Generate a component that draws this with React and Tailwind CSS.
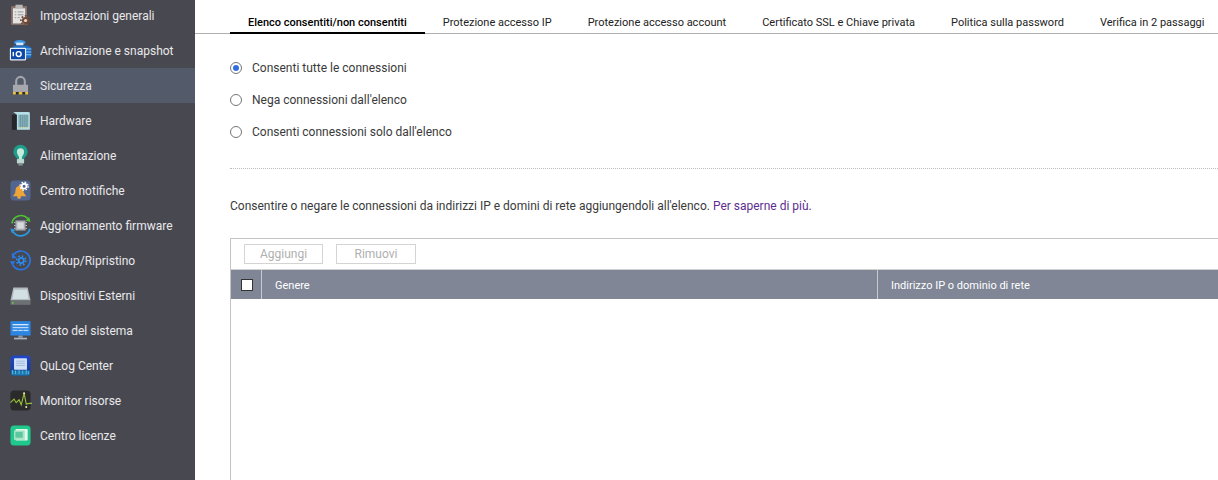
import React from "react";

const I = ({ children }) => (
  <svg width="23" height="23" viewBox="0 0 32 32" className="shrink-0">{children}</svg>
);

const icons = {
  settings: (
    <I>
      <rect x="3" y="3" width="22" height="26" fill="#8d7468" />
      <rect x="5.5" y="6" width="17" height="21" fill="#e4e4e4" />
      <rect x="9" y="1" width="10" height="5" fill="#b9b9b9" />
      <path d="M8 11h2M12 11h8M8 15h2M12 15h8M8 19h2M12 19h3" stroke="#8a8a8a" strokeWidth="1.2" />
      <circle cx="23" cy="23" r="5" fill="#6e4a38" />
      <circle cx="23" cy="23" r="6.5" fill="none" stroke="#6e4a38" strokeWidth="2.4" strokeDasharray="2.4 2.4" />
      <circle cx="23" cy="23" r="2.2" fill="#e8d8c8" />
    </I>
  ),
  storage: (
    <I>
      <ellipse cx="15" cy="5" rx="8" ry="3.5" fill="#3b97ea" />
      <rect x="10" y="5" width="10" height="4" fill="#d5e8fa" />
      <path d="M6 9h20l5 3v12a3 3 0 0 1-3 3H6z" fill="#1d6fc7" />
      <path d="M22 14h9M22 18h9M22 22h9" stroke="#8cc4f5" strokeWidth="1.4" />
      <rect x="2" y="13" width="21" height="16" rx="1" fill="#0d47a8" stroke="#e9f1fa" strokeWidth="1.6" />
      <circle cx="13.5" cy="21" r="3.4" fill="none" stroke="#ffffff" strokeWidth="2" />
      <rect x="5" y="18" width="2" height="6" fill="#ffffff" />
    </I>
  ),
  lock: (
    <I>
      <path d="M10 16v-6a6 6 0 0 1 12 0v6" fill="none" stroke="#a3a5ac" strokeWidth="3" />
      <rect x="5.5" y="15" width="21" height="13" rx="1" fill="#a6a8ae" />
      <rect x="5.5" y="25" width="21" height="3.5" fill="#2d2d30" />
      <path d="M5.5 25h4v3.5h-4zM13.5 25h5v3.5h-5zM22.5 25h4v3.5h-4z" fill="#eac33a" />
    </I>
  ),
  hardware: (
    <I>
      <rect x="4" y="8" width="7" height="21" fill="#25262a" />
      <path d="M6 4h21a2 2 0 0 1 2 2v23H11V8z" fill="#b5dfe6" />
      <rect x="13" y="8" width="14" height="17" fill="#86b0b9" />
      <path d="M16 8v17M19 8v17M22 8v17M25 8v17" stroke="#5f8a96" strokeWidth="1" />
      <path d="M13 26h14" stroke="#c9b04a" strokeWidth="1.2" strokeDasharray="1.4 1.4" />
    </I>
  ),
  power: (
    <I>
      <path d="M16 1a10 10 0 0 1 10 10c0 4-3 6-5 9v2H11v-2c-2-3-5-5-5-9A10 10 0 0 1 16 1z" fill="#1f9c8a" />
      <path d="M16 6a5 5 0 0 1 5 5c0 3-2 5-3 7v5h-4v-5c-1-2-3-4-3-7a5 5 0 0 1 5-5z" fill="#c5ebdc" />
      <rect x="11" y="21" width="10" height="6" rx="1" fill="#bcd6d2" />
      <rect x="13" y="27" width="6" height="3" fill="#85928f" />
    </I>
  ),
  notify: (
    <I>
      <rect x="2" y="2" width="28" height="28" rx="5" fill="#51658f" />
      <path d="M15 9c3 1 5 4 5 7 0 3 2 5 4 8H5c2-2 4-4 4-8 0-4 2-6 6-7z" fill="#eda53a" />
      <circle cx="14" cy="25" r="2.6" fill="#eda53a" />
      <circle cx="21" cy="10" r="3.4" fill="none" stroke="#ffffff" strokeWidth="2.6" />
      <circle cx="21" cy="10" r="5.6" fill="none" stroke="#ffffff" strokeWidth="1.8" strokeDasharray="2.2 2.2" />
    </I>
  ),
  firmware: (
    <I>
      <path d="M4 13a13 13 0 0 1 22-7" fill="none" stroke="#4fc233" strokeWidth="2.4" />
      <path d="M30 11l-7-2 5-5z" fill="#4fc233" />
      <path d="M29 21a13 13 0 0 1-23 4" fill="none" stroke="#2c9ae0" strokeWidth="2.4" />
      <path d="M2 20l7 2-5 5z" fill="#2c9ae0" />
      <rect x="9" y="9" width="14" height="14" fill="#a6acb1" />
      <rect x="11.5" y="11.5" width="9" height="9" fill="#d7dadd" />
      <path d="M7 12h2M7 16h2M7 20h2M23 12h2M23 16h2M23 20h2" stroke="#c8cdd1" strokeWidth="1.2" />
    </I>
  ),
  backup: (
    <I>
      <path d="M6 8a13 13 0 1 1-1 14" fill="none" stroke="#2a75e0" strokeWidth="2.4" />
      <path d="M1 17h8l-4 6zM4 5v8h7z" fill="#2a75e0" />
      <circle cx="17" cy="16" r="3.6" fill="none" stroke="#2a8cf0" strokeWidth="2.6" />
      <circle cx="17" cy="16" r="6.4" fill="none" stroke="#2a8cf0" strokeWidth="2.2" strokeDasharray="2.4 2.6" />
    </I>
  ),
  external: (
    <I>
      <path d="M2 23 6 5h20l4 18z" fill="#b4bbbe" />
      <path d="M7 8h18l2 13H5z" fill="#d2e0e4" />
      <rect x="2" y="23" width="28" height="6" fill="#6d7072" />
      <rect x="4" y="25" width="2.4" height="2.4" fill="#4fd03c" />
    </I>
  ),
  status: (
    <I>
      <rect x="2" y="3" width="28" height="20" fill="#2b85e3" />
      <rect x="5" y="7" width="22" height="1.8" fill="#dcebfb" />
      <rect x="5" y="11" width="22" height="1.8" fill="#bcd9f7" />
      <rect x="5" y="15" width="7" height="1.8" fill="#bcd9f7" />
      <rect x="13" y="15" width="6" height="1.8" fill="#bcd9f7" />
      <rect x="20" y="15" width="7" height="1.8" fill="#bcd9f7" />
      <rect x="13" y="23" width="6" height="3" fill="#8c9aa5" />
      <rect x="7" y="26" width="18" height="2.4" fill="#a9b4bc" />
    </I>
  ),
  qulog: (
    <I>
      <defs>
        <linearGradient id="ql" x1="0" y1="0" x2="0" y2="1">
          <stop offset="0" stopColor="#2347c9" />
          <stop offset="1" stopColor="#123a8c" />
        </linearGradient>
      </defs>
      <rect x="2" y="2" width="28" height="28" rx="5" fill="url(#ql)" />
      <rect x="7" y="6" width="18" height="16" rx="1" fill="#cfe0f5" />
      <path d="M10 10h12M10 13h12M10 16h12" stroke="#91abd4" strokeWidth="1" />
      <path d="M3 23h26v4a3 3 0 0 1-3 3H6a3 3 0 0 1-3-3z" fill="#1e78b0" />
      <path d="M5 22v6M9 23v5M14 21v7M19 23v5M24 22v6M27 24v4" stroke="#6fd0e8" strokeWidth="1" />
    </I>
  ),
  monitor: (
    <I>
      <rect x="2" y="2" width="28" height="28" rx="5" fill="#2a2a2a" />
      <path d="M2 19l5-5 3 5 4-4 3 7 4-16 3 15 4-1h4" fill="none" stroke="#9ac23c" strokeWidth="1.5" />
      <circle cx="21" cy="6" r="1.4" fill="#e8efb5" />
      <circle cx="24" cy="25" r="1.4" fill="#e8efb5" />
    </I>
  ),
  license: (
    <I>
      <rect x="2" y="2" width="28" height="28" rx="5" fill="#1fc98c" />
      <rect x="9" y="7" width="17" height="16" rx="1" fill="#e6f6ec" />
      <rect x="7" y="9" width="15" height="13" fill="#a6e4c6" />
      <rect x="9" y="11" width="10" height="8" fill="#5cc79e" />
    </I>
  ),
};

const items = [
  ["settings", "Impostazioni generali"],
  ["storage", "Archiviazione e snapshot"],
  ["lock", "Sicurezza", true],
  ["hardware", "Hardware"],
  ["power", "Alimentazione"],
  ["notify", "Centro notifiche"],
  ["firmware", "Aggiornamento firmware"],
  ["backup", "Backup/Ripristino"],
  ["external", "Dispositivi Esterni"],
  ["status", "Stato del sistema"],
  ["qulog", "QuLog Center"],
  ["monitor", "Monitor risorse"],
  ["license", "Centro licenze"],
];

const tabs = [
  "Elenco consentiti/non consentiti",
  "Protezione accesso IP",
  "Protezione accesso account",
  "Certificato SSL e Chiave privata",
  "Politica sulla password",
  "Verifica in 2 passaggi",
];

const Radio = ({ on, label }) => (
  <div className="flex items-center h-[32px]">
    <span className="w-[12px] h-[12px] rounded-full border border-[#757575] bg-white flex items-center justify-center shrink-0">
      {on && <span className="w-[6px] h-[6px] rounded-full bg-[#2f6fe0]" />}
    </span>
    <span className="ml-[10px] text-[12px] text-[#3a3a3a]">{label}</span>
  </div>
);

export default function App() {
  return (
    <div className="flex w-[1218px] h-[480px] overflow-hidden bg-white font-['Roboto',sans-serif]">
      <aside className="w-[195px] shrink-0 bg-[#484851] overflow-hidden">
        <ul className="-mt-[2px]">
          {items.map(([k, label, active]) => (
            <li
              key={label}
              className={`flex items-center h-[35px] pl-[9px] ${active ? "bg-[#535a69]" : ""}`}
            >
              {icons[k]}
              <span className="ml-[8px] text-[12px] text-[#e9e9ea]">{label}</span>
            </li>
          ))}
        </ul>
      </aside>
      <main className="flex-1 min-w-0">
        <nav className="flex h-[34px] pl-[35px] border-b border-[#b0b0b0] whitespace-nowrap">
          {tabs.map((t, i) => (
            <div
              key={t}
              className={`h-[34px] px-[18px] pt-[16px] text-[11px] leading-[14px] text-[#222] ${
                i === 0 ? "border-b-2 border-black font-medium text-black" : ""
              }`}
            >
              {t}
            </div>
          ))}
        </nav>
        <section className="pl-[35px]">
          <div className="pt-[18px] pb-[20px] border-b border-dotted border-[#bdbdbd]">
            <Radio on label="Consenti tutte le connessioni" />
            <Radio label="Nega connessioni dall'elenco" />
            <Radio label="Consenti connessioni solo dall'elenco" />
          </div>
          <p className="mt-[29px] text-[12px] leading-[16px] text-[#3a3a3a]">
            Consentire o negare le connessioni da indirizzi IP e domini di rete aggiungendoli all'elenco.{" "}
            <span className="text-[#5e2d91]">Per saperne di più.</span>
          </p>
          <div className="mt-[24px] h-[300px] border-t border-l border-[#c4c4c4]">
            <div className="flex gap-[13px] pl-[13px] pt-[5px] h-[31px] border-b border-[#d0d0d0]">
              <button className="w-[79px] h-[20px] border border-[#d4d4d4] text-[12px] text-[#b0b0b0]">Aggiungi</button>
              <button className="w-[80px] h-[20px] border border-[#d4d4d4] text-[12px] text-[#b0b0b0]">Rimuovi</button>
            </div>
            <div className="flex h-[29px] bg-[#808696] text-[11px] text-white">
              <div className="w-[31px] h-full flex items-center justify-center border-r border-[#c8cad1]">
                <span className="w-[12px] h-[12px] ml-[1px] bg-white border border-[#333]" />
              </div>
              <div className="w-[616px] h-full pl-[13px] flex items-center border-r border-[#c8cad1]">
                <span className="mt-[4px]">Genere</span>
              </div>
              <div className="pl-[13px] flex items-center">
                <span className="mt-[4px]">Indirizzo IP o dominio di rete</span>
              </div>
            </div>
          </div>
        </section>
      </main>
    </div>
  );
}
